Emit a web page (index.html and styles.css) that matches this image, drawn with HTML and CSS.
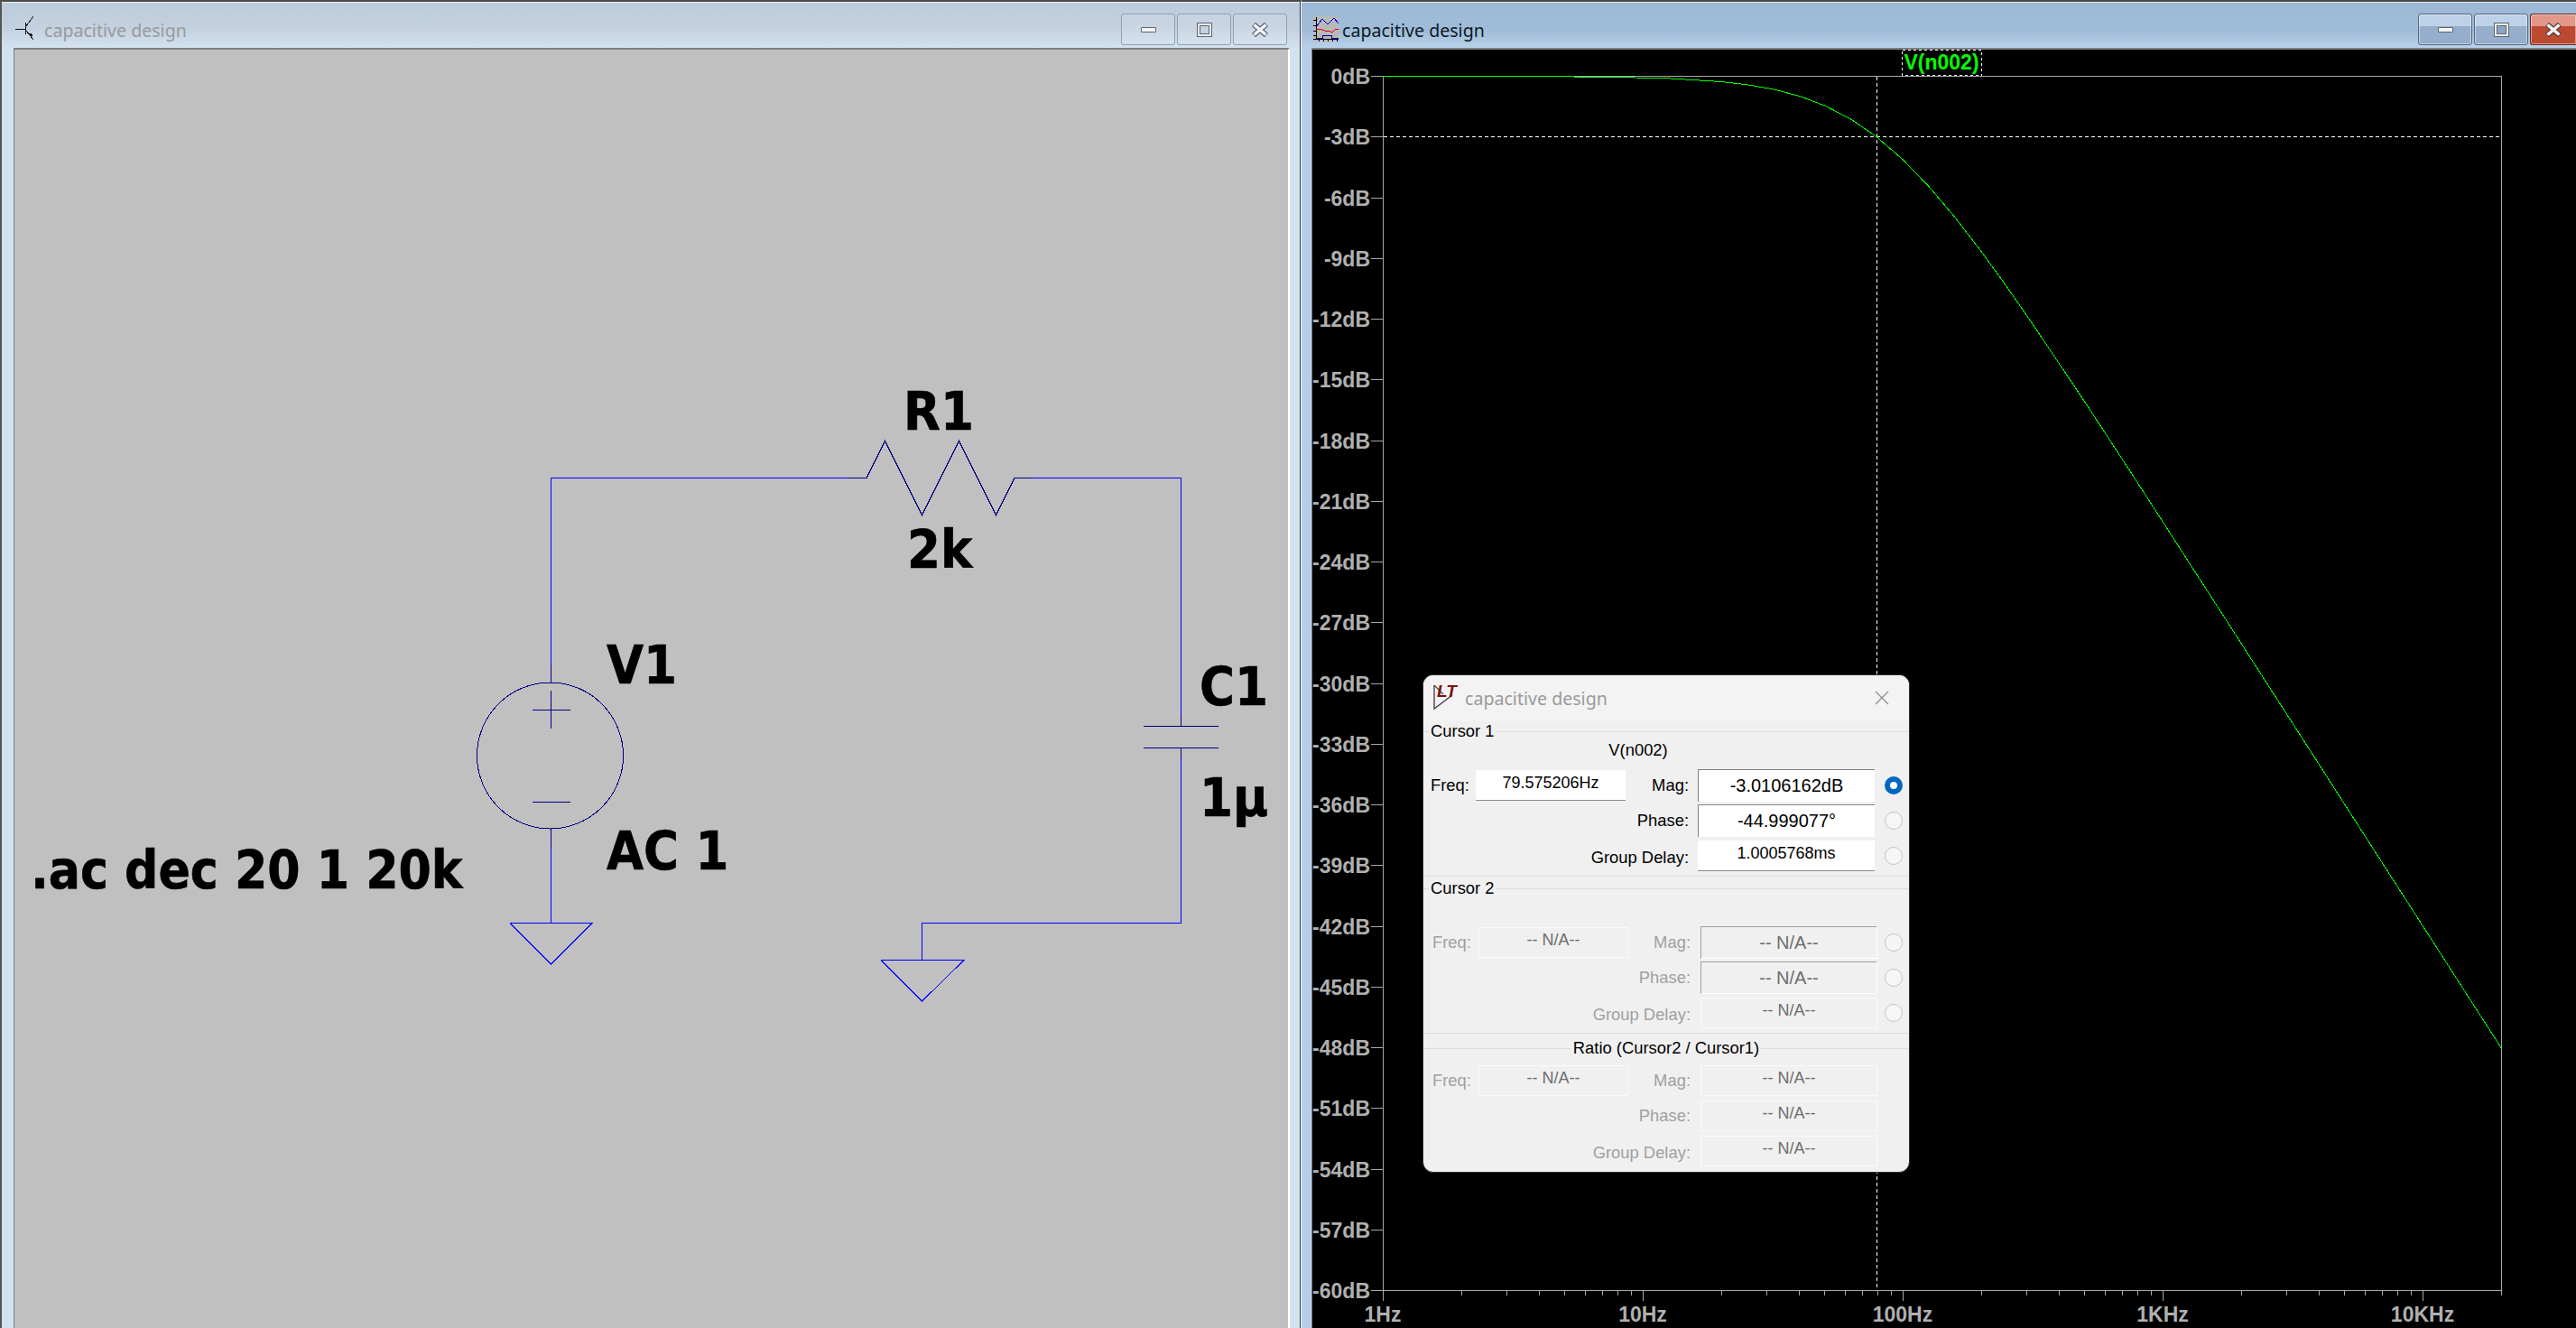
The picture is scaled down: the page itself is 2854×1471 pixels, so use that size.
FILE: index.html
```html
<!DOCTYPE html>
<html lang="en">
<head>
    <meta charset="UTF-8">
    <title>capacitive design</title>
    <link rel="stylesheet" href="styles.css">
</head>
<body>

    <!-- schematic window -->
    <div class="window window-left">
        <div class="titlebar">
            <svg class="app-icon" width="22" height="28" viewBox="15 18 22 28" shape-rendering="crispEdges">
                <path d="M16 32H27M27.5 25V38M28 29L36 18M28 34L36 44" fill="none" stroke="#111" stroke-width="1"/>
                <path d="M30 36L35 38L34 43Z" fill="#111"/>
            </svg>
            <span class="title">capacitive design</span>
            <div class="controls">
                <div class="ctrl"><div class="glyph-min"></div></div>
                <div class="ctrl"><div class="glyph-max"></div></div>
                <div class="ctrl"><svg class="glyph-close" width="18" height="16" viewBox="0 0 18 16"><path d="M2 2L16 14M16 2L2 14" stroke="#5b6675" stroke-width="6"/><path d="M2.5 2.5L15.5 13.5M15.5 2.5L2.5 13.5" stroke="#f4f4f4" stroke-width="3.6"/></svg></div>
            </div>
        </div>
        <div class="canvas">
            <svg class="schematic" width="1411" height="1416" viewBox="16 55 1411 1416" shape-rendering="crispEdges">
                <!-- wires -->
                <path class="wire" d="M610.5 735V529.5H940M1144 529.5H1308.5V792M1308.5 840V1022.5H1021.5V1063M610.5 940V1022"/>
                <path class="wire" d="M565 1022.5H656L610.5 1068L565 1022.5M976 1063.5H1068L1021.5 1109L976 1063.5"/>
                <!-- components -->
                <path class="part" d="M940 529.5H960L980.5 488.5L1021.5 570.5L1062.5 488.5L1103.5 570.5L1124 529.5H1144"/>
                <path class="part" d="M610.5 735V756M610.5 918V940M610.5 765V807M590 786.5H632M590 888.5H632"/>
                <circle class="part" cx="609.5" cy="837" r="81"/>
                <path class="part" d="M1308.5 792V804.5M1267 804.5H1350M1267 828.5H1350M1308.5 828.5V840"/>
                <!-- labels -->
                <text class="sch-text" x="1001" y="476">R1</text>
                <text class="sch-text" x="1005" y="629">2k</text>
                <text class="sch-text" x="672" y="757">V1</text>
                <text class="sch-text" x="672" y="963">AC 1</text>
                <text class="sch-text" x="1329" y="781">C1</text>
                <text class="sch-text" x="1329" y="904">1µ</text>
                <text class="sch-text sch-cmd" x="34" y="984">.ac dec 20 1 20k</text>
            </svg>
        </div>
    </div>

    <!-- waveform window -->
    <div class="window window-right">
        <div class="titlebar">
            <svg class="app-icon" width="28" height="28" viewBox="0 0 28 28" shape-rendering="crispEdges">
                <rect width="28" height="28" fill="#b9b9b9"/>
                <path d="M3 1V25M0 25H28M0 4H3M0 10H3M0 16H3M0 21H3M6 25V28M11 25V28M16 25V28M21 25V28M26 25V28" fill="none" stroke="#000"/>
                <path d="M3 12L10 3L16 9L23 2L28 8" fill="none" stroke="#0000d0"/>
                <path d="M3 14H7L13 16H17L19 17H22L25 14H28" fill="none" stroke="#e00000"/>
                <path d="M3 24H10V21H20V24H28" fill="none" stroke="#000090"/>
            </svg>
            <span class="title">capacitive design</span>
            <div class="controls">
                <div class="ctrl"><div class="glyph-min"></div></div>
                <div class="ctrl"><div class="glyph-max"></div></div>
                <div class="ctrl ctrl-close"><svg class="glyph-close" width="18" height="16" viewBox="0 0 18 16"><path d="M2 2L16 14M16 2L2 14" stroke="#5a3a3a" stroke-width="6"/><path d="M2.5 2.5L15.5 13.5M15.5 2.5L2.5 13.5" stroke="#f4f4f4" stroke-width="3.6"/></svg></div>
            </div>
        </div>
        <div class="canvas canvas-plot">
            <svg class="plot" width="1400" height="1416" viewBox="1454 55 1400 1416" shape-rendering="crispEdges">
                <!-- frame and ticks -->
                <path class="axis" d="M1532.5 84.5H2771.5V1435M1532.5 84.5V1441M1532.5 1429.5H2771.5"/>
                <path class="axis" d="M1519 84.5H1532M1519 151.5H1532M1519 219.5H1532M1519 286.5H1532M1519 353.5H1532M1519 420.5H1532M1519 488.5H1532M1519 555.5H1532M1519 622.5H1532M1519 689.5H1532M1519 757.5H1532M1519 824.5H1532M1519 891.5H1532M1519 958.5H1532M1519 1026.5H1532M1519 1093.5H1532M1519 1160.5H1532M1519 1227.5H1532M1519 1295.5H1532M1519 1362.5H1532M1519 1429.5H1532"/>
                <path class="axis" d="M1820.5 1429V1441M2108.5 1429V1441M2396.5 1429V1441M2684.5 1429V1441"/>
                <path class="axis" d="M1619.5 1429V1435M1669.5 1429V1435M1705.5 1429V1435M1733.5 1429V1435M1756.5 1429V1435M1775.5 1429V1435M1792.5 1429V1435M1807.5 1429V1435M1907.5 1429V1435M1957.5 1429V1435M1993.5 1429V1435M2021.5 1429V1435M2044.5 1429V1435M2063.5 1429V1435M2080.5 1429V1435M2095.5 1429V1435M2195.5 1429V1435M2245.5 1429V1435M2281.5 1429V1435M2309.5 1429V1435M2332.5 1429V1435M2351.5 1429V1435M2368.5 1429V1435M2383.5 1429V1435M2483.5 1429V1435M2533.5 1429V1435M2569.5 1429V1435M2597.5 1429V1435M2620.5 1429V1435M2639.5 1429V1435M2656.5 1429V1435M2671.5 1429V1435"/>
                <!-- cursor -->
                <path class="cursor" d="M1533 151.5H2771M2079.5 85V1429"/>
                <!-- trace -->
                <polyline class="trace" points="1532.3,84.5 1647.5,84.5 1733.9,84.9 1791.5,85.5 1849.1,86.9 1906.8,90.5 1935.6,93.8 1964.4,98.8 1993.2,106.3 2022,117.1 2050.8,132.1 2079.6,152 2108.4,177 2137.2,206.8 2166,240.8 2194.8,278.2 2223.6,318 2252.4,359.5 2310.1,445.6 2367.7,533.8 2511.7,757.1 2655.7,981.2 2771,1160.5"/>
                <!-- trace name -->
                <rect class="name-box" x="2107.5" y="55.5" width="88" height="28"/>
                <text class="name" x="2151" y="77">V(n002)</text>
                <!-- dB labels -->
                <g class="y-labels">
                    <text x="1518" y="93">0dB</text>
                    <text x="1518" y="160">-3dB</text>
                    <text x="1518" y="228">-6dB</text>
                    <text x="1518" y="295">-9dB</text>
                    <text x="1518" y="362">-12dB</text>
                    <text x="1518" y="429">-15dB</text>
                    <text x="1518" y="497">-18dB</text>
                    <text x="1518" y="564">-21dB</text>
                    <text x="1518" y="631">-24dB</text>
                    <text x="1518" y="698">-27dB</text>
                    <text x="1518" y="766">-30dB</text>
                    <text x="1518" y="833">-33dB</text>
                    <text x="1518" y="900">-36dB</text>
                    <text x="1518" y="967">-39dB</text>
                    <text x="1518" y="1035">-42dB</text>
                    <text x="1518" y="1102">-45dB</text>
                    <text x="1518" y="1169">-48dB</text>
                    <text x="1518" y="1236">-51dB</text>
                    <text x="1518" y="1304">-54dB</text>
                    <text x="1518" y="1371">-57dB</text>
                    <text x="1518" y="1438">-60dB</text>
                </g>
                <g class="x-labels">
                    <text x="1532" y="1464">1Hz</text>
                    <text x="1820" y="1464">10Hz</text>
                    <text x="2108" y="1464">100Hz</text>
                    <text x="2396" y="1464">1KHz</text>
                    <text x="2684" y="1464">10KHz</text>
                </g>
            </svg>
        </div>

        <!-- cursor readout dialog -->
        <div class="dialog">
            <div class="dialog-title">
                <svg class="lt-logo" width="32" height="36" viewBox="0 -5 32 36">
                    <path d="M2 2V28L22 13" fill="none" stroke="#444" stroke-width="1.4"/>
                    <path d="M2 2L12 12" fill="none" stroke="#444" stroke-width="1.2"/>
                    <text class="lt-text" x="5" y="15">LT</text>
                </svg>
                <span class="title">capacitive design</span>
                <svg class="dialog-close" width="16" height="16" viewBox="0 0 16 16"><path d="M1 1L15 15M15 1L1 15" stroke="#8a8a8a" stroke-width="1.1"/></svg>
            </div>

            <fieldset class="group group-first">
                <legend>Cursor 1</legend>
                <div class="trace-name">V(n002)</div>
                <div class="rows">
                    <span class="lbl lbl-freq">Freq:</span>
                    <div class="field flat">79.575206Hz</div>
                    <span class="lbl lbl-mid">Mag:</span>
                    <div class="field sunken on">-3.0106162dB</div>
                    <div class="radio radio-on"></div>
                    <span class="lbl lbl-wide">Phase:</span>
                    <div class="field sunken on">-44.999077°</div>
                    <div class="radio"></div>
                    <span class="lbl lbl-wide lbl-low">Group Delay:</span>
                    <div class="field flat">1.0005768ms</div>
                    <div class="radio"></div>
                </div>
            </fieldset>

            <fieldset class="group group-off group-second">
                <legend>Cursor 2</legend>
                <div class="rows">
                    <span class="lbl lbl-freq">Freq:</span>
                    <div class="field flat">-- N/A--</div>
                    <span class="lbl lbl-mid">Mag:</span>
                    <div class="field sunken">-- N/A--</div>
                    <div class="radio"></div>
                    <span class="lbl lbl-wide">Phase:</span>
                    <div class="field sunken">-- N/A--</div>
                    <div class="radio"></div>
                    <span class="lbl lbl-wide lbl-low">Group Delay:</span>
                    <div class="field flat">-- N/A--</div>
                    <div class="radio"></div>
                </div>
            </fieldset>

            <fieldset class="group group-off group-ratio">
                <legend>Ratio (Cursor2 / Cursor1)</legend>
                <div class="rows">
                    <span class="lbl lbl-freq">Freq:</span>
                    <div class="field flat">-- N/A--</div>
                    <span class="lbl lbl-mid">Mag:</span>
                    <div class="field flat">-- N/A--</div>
                    <div></div>
                    <span class="lbl lbl-wide">Phase:</span>
                    <div class="field flat">-- N/A--</div>
                    <div></div>
                    <span class="lbl lbl-wide lbl-low">Group Delay:</span>
                    <div class="field flat">-- N/A--</div>
                    <div></div>
                </div>
            </fieldset>
        </div>
    </div>

</body>
</html>
```

FILE: styles.css
```css
body {
    margin: 0;
    width: 2854px;
    height: 1471px;
    display: flex;
    overflow: hidden;
    background-color: #444;
    font-family: "Liberation Sans", Arial, sans-serif;
}

/* windows */
.window {
    position: relative;
    box-sizing: border-box;
    height: 1471px;
    border-top: 2px solid #4a4a4a;
    display: flex;
    flex-direction: column;
}

.window-left {
    width: 1441px;
    padding-left: 13px;
    padding-right: 11px;
    border-left: 2px solid #555;
    border-right: 1px solid #3a3a3a;
    background-color: #d3e2f1;
    background-image: linear-gradient(#bccbdb, #c3d1e0 30px, #d3e2f0 51px);
    background-repeat: no-repeat;
    background-size: 100% 51px;
}

.window-right {
    width: 1413px;
    padding-left: 11px;
    border-left: 1px solid #f4f8fb;
    background-color: #b6cfe9;
    background-image: linear-gradient(#9db8d5, #a1bcd8 32px, #b9d2ea 51px);
    background-repeat: no-repeat;
    background-size: 100% 51px;
}

.titlebar {
    height: 51px;
    flex: none;
    display: flex;
    align-items: flex-start;
    box-shadow: inset 0 1px 0 rgba(255, 255, 255, 0.7);
}

.window-left .titlebar {
    margin-left: -13px;
    margin-right: -11px;
    padding-left: 14px;
    padding-right: 14px;
}

.window-right .titlebar {
    margin-left: -11px;
    padding-left: 13px;
}

.app-icon {
    margin-top: 16px;
    flex: none;
}

.title {
    font-family: "Noto Sans", "Open Sans", sans-serif;
    font-size: 19.6px;
    line-height: 26px;
    margin-left: 3px;
}

.titlebar .title {
    margin-top: 19px;
    margin-left: 11px;
}

.window-left .title {
    color: #9a9a9a;
}

.window-right .titlebar .title {
    color: #0d1a26;
    margin-left: 4px;
}

.controls {
    margin-left: auto;
    margin-top: 13px;
    display: flex;
    gap: 2px;
}

.ctrl {
    box-sizing: border-box;
    width: 60px;
    height: 35px;
    border: 1px solid #8fa1b8;
    border-radius: 3px;
    background: rgba(255, 255, 255, 0.12);
    display: flex;
    align-items: center;
    justify-content: center;
}

.window-right .ctrl {
    border-color: #55677f;
    box-shadow: inset 0 0 0 1px rgba(255, 255, 255, 0.45);
    background: linear-gradient(#bdd2e8 0, #bdd2e8 40%, #95aecb 40%, #95aecb 100%);
}

.window-right .ctrl-close {
    width: 51px;
    border-color: #6d2a26;
    border-right: none;
    border-radius: 3px 0 0 3px;
    background: linear-gradient(#e39789 0, #e39789 40%, #bb4a30 40%, #bb4a30 100%);
}

.glyph-min {
    width: 15px;
    height: 4px;
    border: 1px solid #5b6675;
    background: #f4f4f4;
    border-radius: 1px;
}

.glyph-max {
    box-sizing: border-box;
    width: 17px;
    height: 16px;
    border: 3px solid #ececec;
    outline: 1px solid #5b6675;
    outline-offset: -1px;
    background: #8fa6c2;
    box-shadow: inset 0 0 0 1px #5b6675;
}

.window-left .glyph-max {
    background: #c4d2e1;
}

.canvas {
    flex: 1;
    display: flex;
    border-top: 2px solid #7f7f7f;
    border-left: 1px solid #7f7f7f;
    border-right: 2px solid #fff;
    background-color: #c0c0c0;
    min-height: 0;
}

.canvas-plot {
    border-right: none;
    background-color: #000;
}

.schematic,
.plot {
    display: block;
    flex: none;
}

/* schematic */
.wire {
    fill: none;
    stroke: #0000ff;
    stroke-width: 1;
}

.part {
    fill: none;
    stroke: #000080;
    stroke-width: 1;
}

.sch-text {
    font-family: "DejaVu Sans Condensed", "DejaVu Sans", sans-serif;
    font-weight: bold;
    font-size: 59px;
    fill: #000;
    stroke: #000;
    stroke-width: 0.6px;
}

.sch-cmd {
    font-size: 58px;
}

/* plot */
.axis {
    fill: none;
    stroke: #a8a8a8;
    stroke-width: 1;
}

.cursor {
    fill: none;
    stroke: #fff;
    stroke-width: 1;
    stroke-dasharray: 4 3;
}

.trace {
    fill: none;
    stroke: #00ff00;
    stroke-width: 1;
}

.name-box {
    fill: none;
    stroke: #fff;
    stroke-width: 1;
    stroke-dasharray: 3 3;
}

.name {
    fill: #00ff00;
    font-weight: bold;
    font-size: 23px;
    text-anchor: middle;
}

.y-labels text,
.x-labels text {
    fill: #b0b0b0;
    font-weight: bold;
    font-size: 23px;
}

.y-labels text {
    text-anchor: end;
}

.x-labels text {
    text-anchor: middle;
}

/* cursor dialog */
.dialog {
    position: absolute;
    left: 134px;
    top: 745px;
    box-sizing: border-box;
    width: 540px;
    height: 552px;
    border: 1px solid #2e2e2e;
    border-radius: 12px;
    background-color: #f0f0f0;
    font-size: 18.4px;
    line-height: 20px;
    color: #000;
    overflow: hidden;
}

.dialog-title {
    height: 51px;
    background-color: #f3f3f3;
    display: flex;
    align-items: flex-start;
    padding-left: 10px;
    position: relative;
}

.lt-logo {
    margin-top: 4px;
    flex: none;
}

.lt-text {
    font-family: "Liberation Sans", sans-serif;
    font-weight: bold;
    font-style: italic;
    font-size: 19px;
    fill: #7a1010;
}

.dialog-title .title {
    color: #9a9a9a;
    margin-top: 13px;
    margin-left: 4px;
}

.dialog-close {
    margin-left: auto;
    margin-right: 22px;
    margin-top: 17px;
}

.group {
    margin: 0;
    padding: 0 0 4px;
    min-width: 0;
    border: none;
    border-top: 1px solid #dcdcdc;
    border-bottom: 1px solid #dcdcdc;
}

.group legend {
    padding: 0 2px;
    margin-left: 6px;
}

.group-first {
    margin-top: 1px;
}

.group-second {
    margin-top: 3px;
}

.group-ratio {
    margin-top: 6px;
    border-bottom: none;
}

.group-ratio legend {
    margin-left: auto;
    margin-right: auto;
}

.trace-name {
    text-align: center;
    margin: 1px 62px 0 0;
}

.rows {
    display: grid;
    grid-template-columns: 50px 166px 70px 196px 1fr;
    grid-auto-rows: 36px;
    row-gap: 3px;
    align-items: center;
    padding-left: 8px;
    margin-top: 11px;
}

.group-off .rows {
    grid-template-columns: 51px 166px 69px 196px 1fr;
    padding-left: 10px;
}

.group-second .rows {
    margin-top: 32px;
}

.group-ratio .rows {
    margin-top: 8px;
}

.lbl-mid,
.lbl-wide {
    text-align: right;
    padding-right: 10px;
}

.lbl-mid {
    grid-column: 3;
    margin-right: -10px;
}

.lbl-wide {
    grid-column: 1 / 4;
    margin-right: -10px;
}

.group-off .lbl-mid,
.group-off .lbl-wide {
    margin-right: -11px;
    padding-right: 11px;
}

.lbl-low {
    padding-top: 3px;
}

.field {
    box-sizing: border-box;
    text-align: center;
    white-space: nowrap;
}

.rows .field:nth-child(n+4) {
    margin-left: 10px;
    margin-right: -10px;
}

.group-off .rows .field:nth-child(n+4) {
    margin-left: 11px;
    margin-right: -11px;
}

.flat {
    height: 34px;
    padding-top: 4px;
    font-size: 18px;
    background-color: #fff;
    border-bottom: 1px solid #8a8a8a;
}

.sunken {
    height: 36px;
    padding-top: 7px;
    font-size: 20px;
    border-top: 1px solid #a0a0a0;
    border-left: 1px solid #a0a0a0;
}

.sunken.on {
    background-color: #fff;
    border-top-color: #808080;
    border-left-color: #808080;
}

.radio {
    box-sizing: border-box;
    justify-self: end;
    width: 20px;
    height: 20px;
    margin-right: 7px;
    border-radius: 50%;
    border: 1px solid #c4c4c4;
    background-color: #f6f6f6;
}

.radio-on {
    border: 6px solid #0067c0;
    background-color: #fff;
}

.group-off .lbl {
    color: #a0a0a0;
}

.group-off .field {
    color: #6d6d6d;
}

.group-off .flat {
    background-color: transparent;
    border: 1px solid #fafafa;
    padding-top: 3px;
}

.group-off .sunken {
    background-color: transparent;
    border-right: 1px solid #fff;
    border-bottom: 1px solid #fff;
}
```
